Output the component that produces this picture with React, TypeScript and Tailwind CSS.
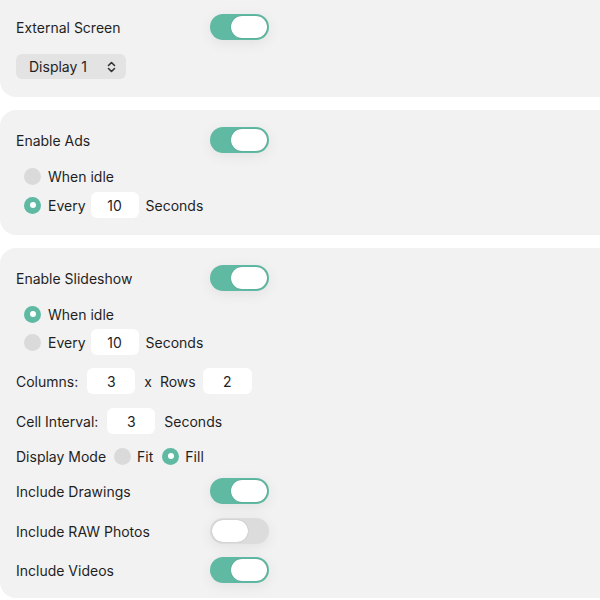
import React from "react";

function Toggle({ on }: { on: boolean }) {
  return (
    <div
      className={`flex h-[26px] w-[59px] shrink-0 items-center rounded-full px-[2px] shadow-[0_3px_14px_rgba(0,0,0,0.07)] ${
        on ? "justify-end bg-[#5fb9a3]" : "justify-start bg-[#dcdcdc]"
      }`}
    >
      <div className="h-[22px] w-[36px] rounded-full bg-white shadow-[0_0_1px_rgba(0,0,0,0.35)]" />
    </div>
  );
}

function Radio({ on }: { on: boolean }) {
  return on ? (
    <div className="flex h-[17px] w-[17px] shrink-0 items-center justify-center rounded-full bg-[#5fb9a3]">
      <div className="h-[6px] w-[6px] rounded-full bg-white" />
    </div>
  ) : (
    <div className="h-[17px] w-[17px] shrink-0 rounded-full bg-[#dadada]" />
  );
}

function Field({ value, w = "w-[48px]" }: { value: string; w?: string }) {
  return (
    <div
      className={`flex h-[26px] ${w} shrink-0 items-center justify-center rounded-md bg-white`}
    >
      {value}
    </div>
  );
}

function ToggleRow({ label, on, className = "" }: { label: string; on: boolean; className?: string }) {
  return (
    <div className={`flex h-[26px] items-center ${className}`}>
      <span className="w-[194px]">{label}</span>
      <Toggle on={on} />
    </div>
  );
}

function RadioRow({
  label,
  on,
  className = "",
  children,
}: {
  label: string;
  on: boolean;
  className?: string;
  children?: React.ReactNode;
}) {
  return (
    <div className={`flex h-[26px] items-center pl-[8px] ${className}`}>
      <Radio on={on} />
      <span className="ml-[7px]">{label}</span>
      {children}
    </div>
  );
}

function Panel({ className = "", children }: { className?: string; children: React.ReactNode }) {
  return <div className={`bg-[#f2f2f2] pl-4 ${className}`}>{children}</div>;
}

export default function App() {
  return (
    <div
      className="h-[600px] w-[600px] overflow-hidden bg-white text-[14px] text-[#1f1f1f]"
      style={{ fontFamily: "Inter, 'Noto Sans', sans-serif" }}
    >
      {/* External screen */}
      <Panel className="rounded-bl-2xl pt-[14px] pb-[18px]">
        <ToggleRow label="External Screen" on />
        <div className="mt-[14px] flex h-[25px] w-[110px] items-center justify-between rounded-md bg-[#e3e3e3] pl-[13px] pr-[10px]">
          <span>Display 1</span>
          <svg width="9" height="12" viewBox="0 0 9 12" fill="none" stroke="#333" strokeWidth="1.6" strokeLinecap="round" strokeLinejoin="round">
            <path d="M1.5 4.5 4.5 1.5 7.5 4.5" />
            <path d="M1.5 7.5 4.5 10.5 7.5 7.5" />
          </svg>
        </div>
      </Panel>

      {/* Ads */}
      <Panel className="mt-[13px] rounded-l-2xl pt-[17px] pb-[17px]">
        <ToggleRow label="Enable Ads" on />
        <RadioRow label="When idle" on={false} className="mt-[10px]" />
        <RadioRow label="Every" on className="mt-[3px]">
          <Field value="10" w="w-[48px] ml-[5px]" />
          <span className="ml-[7px]">Seconds</span>
        </RadioRow>
      </Panel>

      {/* Slideshow */}
      <Panel className="mt-[13px] rounded-l-2xl pt-[17px] pb-[15px]">
        <ToggleRow label="Enable Slideshow" on />
        <RadioRow label="When idle" on className="mt-[10px]" />
        <RadioRow label="Every" on={false} className="mt-[2px]">
          <Field value="10" w="w-[48px] ml-[5px]" />
          <span className="ml-[7px]">Seconds</span>
        </RadioRow>
        <div className="mt-[13px] flex h-[26px] items-center">
          <span>Columns:</span>
          <Field value="3" w="w-[48px] ml-[9px]" />
          <span className="ml-[9px]">x</span>
          <span className="ml-[8px]">Rows</span>
          <Field value="2" w="w-[49px] ml-[7px]" />
        </div>
        <div className="mt-[14px] flex h-[26px] items-center">
          <span>Cell Interval:</span>
          <Field value="3" w="w-[48px] ml-[9px]" />
          <span className="ml-[9px]">Seconds</span>
        </div>
        <div className="mt-[9px] flex h-[26px] items-center">
          <span>Display Mode</span>
          <div className="ml-[8px]">
            <Radio on={false} />
          </div>
          <span className="ml-[6px]">Fit</span>
          <div className="ml-[9px]">
            <Radio on />
          </div>
          <span className="ml-[6px]">Fill</span>
        </div>
        <ToggleRow label="Include Drawings" on className="mt-[9px]" />
        <ToggleRow label="Include RAW Photos" on={false} className="mt-[14px]" />
        <ToggleRow label="Include Videos" on className="mt-[13px]" />
      </Panel>
    </div>
  );
}
